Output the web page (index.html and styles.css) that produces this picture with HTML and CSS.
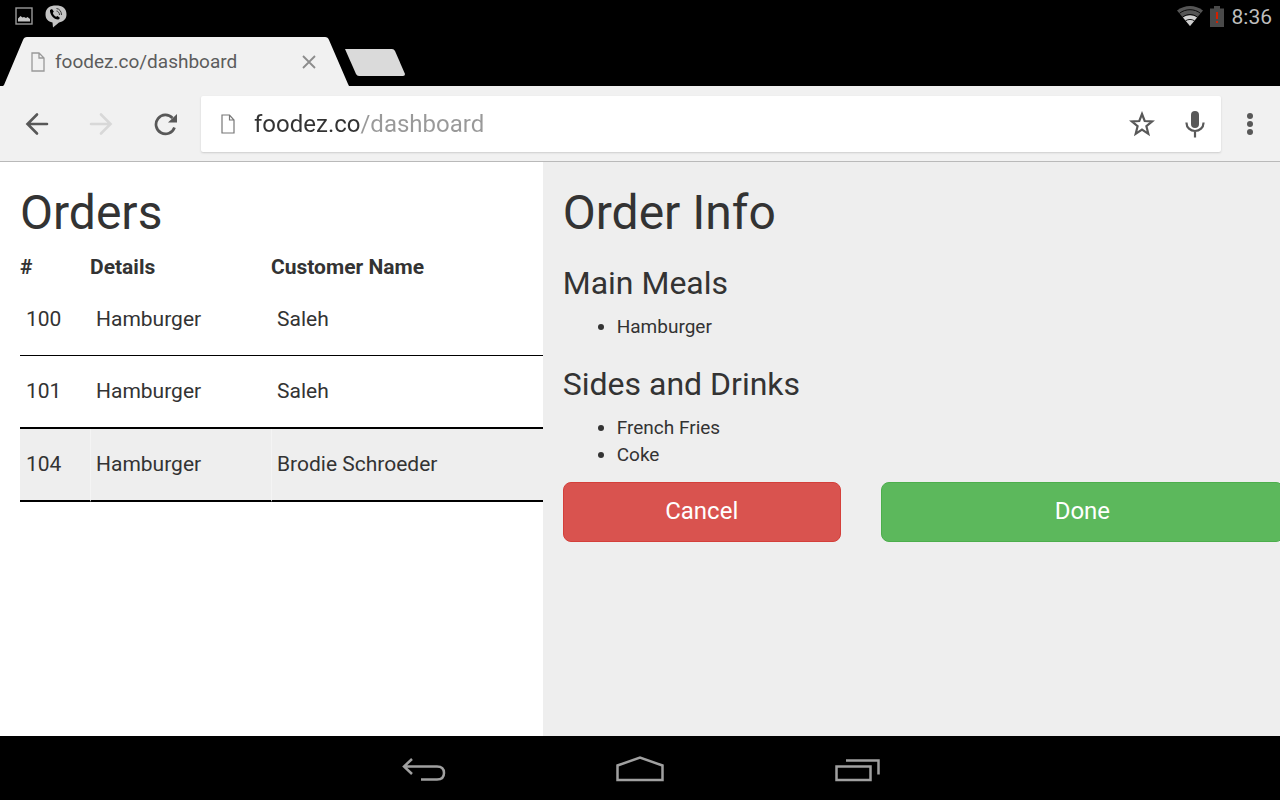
FILE: index.html
```html
<!DOCTYPE html>
<html lang="en">
<head>
  <meta charset="UTF-8">
  <meta name="viewport" content="width=device-width, initial-scale=1">
  <title>foodez.co/dashboard</title>
  <link rel="stylesheet" href="styles.css">
</head>
<body>

<!-- Status bar -->
<div class="statusBar">
  <div class="statusIcons">
    <svg width="18" height="18" viewBox="0 0 18 18">
      <rect x="1" y="1" width="16" height="16" fill="none" stroke="#9a9a9a" stroke-width="1.4"/>
      <path d="M3 14.500V11.500L5.500 9L7.500 10.500L9 10L11 11L12.500 10L15 12V14.500Z" fill="#c4c4c4"/>
    </svg>
    <svg width="22" height="23" viewBox="0 0 22 23">
      <path d="M11 0.500C17 0.500 21.500 3 21.500 9.200C21.500 14 18.500 16.500 14 17.500L8 22.500L7.500 17.500C3 16.500 0.500 14 0.500 9.200C0.500 3 5 0.500 11 0.500Z" fill="#c4c4c4"/>
      <path d="M5 5L7 4L8.800 6.500L7.800 8C8.400 9.800 9.600 11.100 11.200 11.800L12.500 11L15 13L13.500 14.500C9.500 15 4.500 9.500 5 5Z" fill="#000"/>
      <path d="M11.500 3.500C14.500 3.800 16.500 6.500 16.500 10M11.500 6C13.200 6.200 14.500 7.800 14.500 10" fill="none" stroke="#333" stroke-width="1"/>
    </svg>
  </div>
  <div class="statusIcons">
    <svg class="wifi" width="26" height="20" viewBox="0 0 26 20">
      <path d="M13 20L0 4.500C7.500-1.500 18.500-1.500 26 4.500Z" fill="#555"/>
      <path d="M13 20L6 11.500C10.500 8.500 15.500 8.500 20 11.500Z" fill="#d0d0d0"/>
      <path d="M2.500 7.300C8.500 2.500 17.500 2.500 23.500 7.300M5.500 11.100C10 7.700 16 7.700 20.500 11.100M8.500 14.800C11.500 13 14.500 13 17.500 14.800" fill="none" stroke="#000" stroke-width="0.900"/>
    </svg>
    <svg width="14" height="21" viewBox="0 0 14 21">
      <path d="M0 2.500H4V0H10V2.500H14V21H0Z" fill="#4a4a4a"/>
      <path d="M6 6H8V13H6ZM6 15H8V17H6Z" fill="#d42000"/>
    </svg>
    <span class="clock">8:36</span>
  </div>
</div>

<!-- Tabs -->
<div class="tabStrip">
  <div class="tab">
    <svg class="tabShape" viewBox="0 0 346 49" preserveAspectRatio="none">
      <path d="M0 49L1 48L20 3Q21 0 24 0H322Q325 0 326 3L345 47L346 49Z" fill="#f1f1f1"/>
    </svg>
    <svg width="14" height="20" viewBox="0 0 14 20">
      <path d="M1 1H8L13 6V19H1ZM8 1V6H13" fill="none" stroke="#999" stroke-width="1.300"/>
    </svg>
    <span class="tabTitle">foodez.co/dashboard</span>
    <button class="iconButton" aria-label="Close tab">
      <svg width="14" height="14" viewBox="0 0 14 14">
        <path d="M1 1L13 13M13 1L1 13" stroke="#8c8c8c" stroke-width="1.800"/>
      </svg>
    </button>
  </div>
  <button class="iconButton newTab" aria-label="New tab">
    <svg width="62" height="27" viewBox="0 0 62 27">
      <path d="M1 0H48Q50 0 51 2L61 25Q61 27 59 27H15Q13 27 12 25L1 0Z" fill="#dadada"/>
    </svg>
  </button>
</div>

<!-- Toolbar -->
<div class="toolbar">
  <div class="navButtons">
    <button class="iconButton" aria-label="Back">
      <svg width="24" height="24" viewBox="0 0 24 24">
        <path d="M22 12H3M12 2.500L2.500 12L12 21.500" fill="none" stroke="#585858" stroke-width="2.600" stroke-linecap="round"/>
      </svg>
    </button>
    <button class="iconButton" aria-label="Forward" disabled>
      <svg width="24" height="24" viewBox="0 0 24 24">
        <path d="M2 12H21M12 2.500L21.500 12L12 21.500" fill="none" stroke="#d8d8d8" stroke-width="2.600" stroke-linecap="round"/>
      </svg>
    </button>
    <button class="iconButton" aria-label="Reload">
      <svg width="24" height="24" viewBox="0 0 24 24">
        <path d="M21.500 15.500A9.500 9.500 0 1 1 19.500 6" fill="none" stroke="#585858" stroke-width="2.700"/>
        <path d="M24 2V10.500H15Z" fill="#585858"/>
      </svg>
    </button>
  </div>
  <form class="urlBar">
    <svg width="14" height="20" viewBox="0 0 14 20">
      <path d="M1 1H8.500L13 6V19H1ZM8.500 1V6H13" fill="none" stroke="#777" stroke-width="1.200"/>
    </svg>
    <input class="urlInput" type="text" aria-label="Address" value="foodez.co/dashboard">
    <div class="urlActions">
      <button class="iconButton" type="button" aria-label="Bookmark">
        <svg width="26" height="26" viewBox="0 0 26 26">
          <path d="M13 3L15.700 10L23.200 10.400L17.400 15.200L19.300 22.800L13 18.600L6.700 22.800L8.600 15.200L2.800 10.400L10.300 10Z" fill="none" stroke="#585858" stroke-width="2.200"/>
        </svg>
      </button>
      <button class="iconButton" type="button" aria-label="Voice search">
        <svg width="20" height="28" viewBox="0 0 20 28">
          <rect x="6" y="1" width="8" height="17" rx="4" fill="#585858"/>
          <path d="M1.500 12.500V13A8.500 8 0 0 0 18.500 13V12.500M10 21V27.500" fill="none" stroke="#585858" stroke-width="2.200"/>
        </svg>
      </button>
    </div>
  </form>
  <button class="iconButton menuButton" aria-label="Menu">
    <svg width="6" height="22" viewBox="0 0 6 22">
      <circle cx="3" cy="3" r="3" fill="#585858"/>
      <circle cx="3" cy="11" r="3" fill="#585858"/>
      <circle cx="3" cy="19" r="3" fill="#585858"/>
    </svg>
  </button>
</div>

<!-- Dashboard -->
<div class="dashboard">
  <div class="orders">
    <h1>Orders</h1>
    <table class="orderTable">
      <thead>
        <tr>
          <th class="numberCol">#</th>
          <th class="detailsCol">Details</th>
          <th>Customer Name</th>
        </tr>
      </thead>
      <tbody>
        <tr class="first">
          <td>100</td>
          <td>Hamburger</td>
          <td>Saleh</td>
        </tr>
        <tr>
          <td>101</td>
          <td>Hamburger</td>
          <td>Saleh</td>
        </tr>
        <tr class="selected">
          <td>104</td>
          <td>Hamburger</td>
          <td>Brodie Schroeder</td>
        </tr>
      </tbody>
    </table>
  </div>

  <div class="orderInfo">
    <h1>Order Info</h1>
    <h3>Main Meals</h3>
    <ul>
      <li>Hamburger</li>
    </ul>
    <h3>Sides and Drinks</h3>
    <ul>
      <li>French Fries</li>
      <li>Coke</li>
    </ul>
    <div class="actions">
      <button class="btn cancel">Cancel</button>
      <button class="btn done">Done</button>
    </div>
  </div>
</div>

<!-- System navigation -->
<div class="systemNav">
  <button class="iconButton" aria-label="Back">
    <svg width="48" height="28" viewBox="0 0 48 28">
      <path d="M4 11.500H37Q44 11.500 44 18T37 24.500H21M12 4L4 11.500L12 19" fill="none" stroke="#a0a0a0" stroke-width="2.500"/>
    </svg>
  </button>
  <button class="iconButton" aria-label="Home">
    <svg width="48" height="28" viewBox="0 0 48 28">
      <path d="M1.500 25V10.500L24 2.500L46.500 10.500V25Z" fill="none" stroke="#a0a0a0" stroke-width="2.500"/>
    </svg>
  </button>
  <button class="iconButton" aria-label="Recent apps">
    <svg width="48" height="28" viewBox="0 0 48 28">
      <path d="M4.500 11.500H38.500V25H4.500ZM14 5.500H46.500V19.500" fill="none" stroke="#a0a0a0" stroke-width="2.500"/>
    </svg>
  </button>
</div>

</body>
</html>
```
FILE: styles.css
```css
* { box-sizing: border-box; }

body {
  margin: 0;
  min-height: 100vh;
  display: flex;
  flex-direction: column;
  background: #000;
  color: #333;
  font-family: Roboto, sans-serif;
  font-size: 19px;
  line-height: 27px;
}

svg { display: block; flex: none; }

.iconButton {
  padding: 0;
  border: none;
  background: none;
  cursor: pointer;
}

.statusBar {
  display: flex;
  justify-content: space-between;
  height: 37px;
  padding: 4px 8px 0 15px;
}

.statusIcons {
  display: flex;
  align-items: center;
  gap: 12px;
  height: 24px;
}

.wifi { margin-right: -5px; }

.clock {
  margin-left: -4px;
  padding-top: 2px;
  color: #bebebe;
  font-size: 21px;
}

.tabStrip {
  display: flex;
  align-items: center;
  padding-left: 3px;
}

.tab {
  position: relative;
  display: flex;
  align-items: center;
  gap: 10px;
  width: 346px;
  height: 49px;
  padding: 0 33px 0 28px;
}

/* sloped sides lie behind the tab label */
.tabShape {
  position: absolute;
  inset: 0;
  width: 100%;
  height: 100%;
  z-index: -1;
}

.tabTitle {
  flex: 1;
  color: #5c5c5c;
}

.newTab { margin: 2px 0 0 -5px; }

.toolbar {
  display: flex;
  align-items: center;
  height: 76px;
  padding-left: 25px;
  background: #f1f1f1;
  border-bottom: 1px solid #b9b9b9;
}

.navButtons {
  display: flex;
  gap: 40px;
  width: 176px;
}

.urlBar {
  flex: 1;
  display: flex;
  align-items: center;
  gap: 19px;
  height: 56px;
  padding: 0 16px 0 20px;
  background: #fff;
  border-radius: 2px;
  box-shadow: 0 1px 2px #ccc;
}

/* the host is darker than the path */
.urlInput {
  flex: 1;
  min-width: 0;
  padding: 0;
  border: none;
  outline: none;
  font-family: inherit;
  font-size: 24px;
  line-height: 32px;
  color: transparent;
  caret-color: #333;
  background: linear-gradient(to right, #333 107px, #999 107px);
  -webkit-background-clip: text;
  background-clip: text;
}

.urlActions {
  display: flex;
  align-items: center;
  gap: 30px;
}

.menuButton { margin: 0 27px 0 26px; }

.dashboard {
  flex: 1;
  display: grid;
  grid-template-columns: 42.4% 1fr;
  background: #fff;
}

.orders, .orderInfo {
  padding: 24px 0 0 20px;
  overflow: hidden;
}

.orderInfo { background: #eee; }

h1, h3 {
  margin: 0;
  font-weight: 400;
}

h1 {
  font-size: 48px;
  line-height: 54px;
}

h3 {
  margin-top: 25px;
  font-size: 32px;
  line-height: 36px;
}

ul {
  margin: 12px 0 0;
  padding-left: 54px;
}

ul + h3 { margin-top: 26px; }

.orderTable {
  width: 100%;
  margin-top: 14px;
  border-collapse: separate;
  border-spacing: 0;
  table-layout: fixed;
  font-size: 21px;
}

.orderTable th {
  padding: 0 0 2px;
  font-weight: 700;
  text-align: left;
}

.numberCol { width: 70px; }
.detailsCol { width: 181px; }

.orderTable td {
  height: 73px;
  padding: 0 6px;
  border-bottom: 2px solid #000;
}

.orderTable .first td { border-bottom-width: 1px; }

.selected td { background: #eee; }
.selected td + td { border-left: 1px solid #f4f4f4; padding-left: 5px; }

.actions {
  display: grid;
  grid-template-columns: 278px 1fr;
  gap: 40px;
  margin: 14px -4px 0 0;
}

.btn {
  height: 60px;
  padding: 0 16px 3px;
  border: 1px solid;
  border-radius: 8px;
  color: #fff;
  font-family: inherit;
  font-size: 24px;
  cursor: pointer;
}

.cancel { background: #d9534f; border-color: #d43f3a; }
.done { background: #5cb85c; border-color: #4cae4c; }

.systemNav {
  display: flex;
  align-items: center;
  justify-content: center;
  gap: 168px;
  height: 64px;
  padding-top: 2px;
}
```
